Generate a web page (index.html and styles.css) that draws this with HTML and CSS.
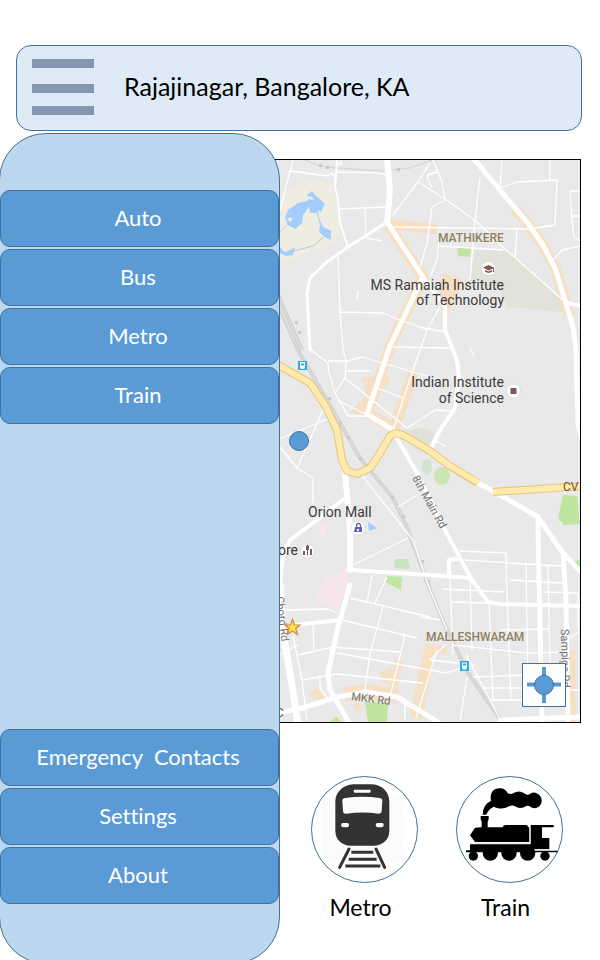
FILE: index.html
```html
<!DOCTYPE html>
<html lang="en">
<head>
<meta charset="utf-8">
<meta name="viewport" content="width=device-width, initial-scale=1">
<title>Transit finder</title>
<link rel="stylesheet" href="styles.css">
</head>
<body>
<div class="page">
  <header class="topbar">
    <button class="menu-button" type="button" aria-label="Menu">
      <svg viewBox="0 0 62 56" width="62" height="56" fill="#8497b0"><path d="M0 0h62v9H0zM0 25h62v9H0zM0 47h62v9H0z"/></svg>
    </button>
    <h1 class="place">Rajajinagar, Bangalore, KA</h1>
  </header>

  <div class="body">
    <nav class="sidebar">
      <div class="group">
        <button class="item" type="button">Auto</button>
        <button class="item" type="button">Bus</button>
        <button class="item" type="button">Metro</button>
        <button class="item" type="button">Train</button>
      </div>
      <div class="group">
        <button class="item" type="button">Emergency&nbsp; Contacts</button>
        <button class="item" type="button">Settings</button>
        <button class="item" type="button">About</button>
      </div>
    </nav>

    <main class="content">
      <section class="map">
        <svg class="map-art" viewBox="272 160 308 562" preserveAspectRatio="xMidYMid slice">
          <rect x="0" y="0" width="900" height="900" fill="#e9e9e9"/>
          <!-- parks, campus and water -->
          <path fill="#efece1" d="M272 200 290 188 307 180 331 183 335 197 338 213 340 232 333 245 313 250 283 263 272 265z"/>
          <path fill="#e1e2da" d="M475 250 503 250 523 263 547 287 565 303 563 312 507 307 500 290 470 283z"/>
          <path fill="#e0e1d9" d="M407 431 420 428 435 432 430 445 425 446z"/>
          <path fill="#a3ccff" d="M285 218 288 210 298 203 307 201 310 198 307 195 312 191 315 195 325 204 321 212 318 210 319 218 323 227 331 231 331 240 325 237 319 232 320 225 317 213 310 213 309 207 303 215 302 223 295 229 288 225zM272 243 280 247 285 252 288 251 295 247 293 255 287 256 280 253zM368 522 377 528 369 531z"/>
          <path fill="#efece1" d="M287 219 290 217 293 219 290 222zM308 198 311 196 314 199 311 200z"/>
          <path fill="none" stroke="#b5cce4" d="M294 251 313 246 325 236M276 236 287 225"/>
          <path fill="#bfe5a0" d="M457 247 471 247 470 257 458 256zM563 495 577 496 580 524 564 525 558 518zM387 576 402 577 401 590 385 582zM365 702 388 703 387 722 368 722zM330 722 336 716 341 722zM573 562 580 559 580 571z"/>
          <path fill="#c8e3bd" d="M395 559 408 559 410 569 394 568z"/>
          <ellipse cx="427" cy="467" rx="5" ry="8" fill="#d3e4cd"/>
          <ellipse cx="442" cy="476" rx="8" ry="9" fill="#c9e6b3"/>
          <path fill="#f7e6ec" d="M348 569 323 578 315 598 338 612 348 583zM318 526 325 523 327 535 320 538z"/>
          <!-- commercial strips -->
          <g fill="none" stroke="#f6dfc2">
            <path stroke-width="10" d="M390 224 436 229"/>
            <path stroke-width="11" d="M388 225 423 277 388 350"/>
            <path stroke-width="11" d="M393 340 367 412 394 429 414 371"/>
            <path stroke-width="11" d="M514 209 527 222 543 245 555 268 565 300 570 316"/>
            <path stroke-width="9" d="M400 661 390 697M313 690 322 700M360 705 355 709M558 700 570 700M571 650 571 722"/>
            <path stroke-width="12" d="M431 645 416 718"/>
            <path stroke-width="14" d="M345 694 367 691 397 696"/>
          </g>
          <path fill="#f6dfc2" d="M362 378 387 375 390 383 380 390 377 403 367 415 350 413 358 403 368 395zM443 273 463 280 455 300 448 313 441 310 440 290zM380 672 392 667 392 684 382 682zM432 644 447 648 447 654 432 653z"/>
          <!-- railways -->
          <g fill="none" stroke="#d3d3d3">
            <path stroke-width="1" d="M305 160 320 166 337 168 383 171 410 168 432 160"/>
            <path stroke-width="2" d="M274 287 280 297 303 350M280 303 300 350M276 302 297 350"/>
            <path stroke-width="4" d="M294 340 299 352 327 400 360 458 393 498 406 525 419 560 430 590 447 630 468 673 500 719"/>
            <path stroke-width="1" stroke="#dedede" d="M294 340 299 352 327 400 360 458 393 498 406 525 419 560 430 590 447 630 468 673 500 719"/>
          </g>
          <path fill="#c9c9c9" d="M319 164h3v3h-3zM326 166h3v3h-3zM397 168h3v3h-3zM298 331h3v3h-3zM295 321h3v3h-3zM328 397h3v3h-3zM339 422h3v3h-3zM347 436h3v3h-3zM359 457h3v3h-3zM391 496h3v3h-3zM402 515h3v3h-3zM421 560h3v3h-3zM427 580h3v3h-3z"/>
          <!-- minor streets -->
          <g fill="none" stroke="#fff" stroke-width="1.3" stroke-linejoin="round">
            <path d="M293 160 280 210M291 171 327 176 332 173 335 177M337 172 377 173 387 175M339 209 387 207M365 208 366 238 382 241M338 255 340 312 343 350 346 360 345 378 335 393M340 312 383 313 400 320 428 330M358 290 357 301M341 160v4h-3"/>
            <path d="M310 340 311 350 328 363 329 373 335 393 348 416 367 416M328 361 347 361 362 357 430 377M346 371 370 371M345 378 407 428M337 400 367 415M377 388 403 398M393 430 413 370 427 330 440 307M393 347 450 348M407 428 435 410 453 411M398 507 417 495M360 473 413 540 430 590 447 630"/>
            <path d="M430 163 417 183 393 215M418 182 445 199 477 222 503 247 563 300M445 200 442 182 433 160M430 173 427 177 432 188M427 175 438 172M445 200 432 207 427 243 420 267M440 230 437 260 430 277M393 227 530 229 555 225 557 180M502 160 500 188 517 182 557 180M550 160V180M480 177 475 220 470 280M440 246 503 250M517 230 515 257M580 191H570L572 220 574 237 580 241M572 216h8M553 260 562 250 580 246M420 327 445 332M470 348l4 8"/>
            <path d="M272 442 332 417M323 410 297 468M280 447 297 468 313 478 313 503M435 440 446 447"/>
            <path d="M350 598 430 617M342 620 417 638M285 610 328 609 338 613M293 636 302 680 307 721M298 655 333 647 400 652M313 625 314 650M302 680 337 674 423 683M337 653 430 670 445 673 468 667M383 607 370 653 365 690M405 635 390 697M372 575 367 602M387 577 375 603M353 565 408 538M320 675 320 688 330 702M280 655 298 645M405 700v20M420 617 440 620M437 650 416 718M445 645 430 660 475 665"/>
            <path d="M449 559 543 565 562 566M460 551 506 553 507 592 511 700M450 577 453 655M470 578 472 650M489 603 493 700M526 563 528 693M548 565 550 663M443 589 505 592M452 602 488 603M510 580 562 583M543 592 578 593 578 630M500 630 550 629M453 645 527 653 565 652M473 677 528 675M484 688h44M492 700h38M467 677 460 721M568 640 578 632M466 655 500 719M568 690h12"/>
          </g>
          <!-- main streets -->
          <g fill="none" stroke="#fff" stroke-linejoin="round" stroke-linecap="round">
            <path stroke-width="3" d="M387 222 348 247 327 262 310 278 307 293 310 350"/>
            <path stroke-width="2" d="M337 160 336 175 335 187 338 200 340 223 348 247"/>
            <path stroke-width="6" d="M387 158 390 190 387 222"/>
            <path stroke-width="5" d="M387 222 423 277 390 346 367 414 393 430"/>
            <path stroke-width="4" d="M423 277 445 307 445 330 457 360 459 377 455 408 440 430 430 450M567 303 582 306M295 625 340 620M449 575 449 560 458 559"/>
            <path stroke-width="5" d="M473 158 500 190 527 222 543 245 555 268 565 300 573 327 576 350 578 423 582 440"/>
            <path stroke-width="6" d="M337 430 345 472 350 530 350 570"/>
            <path stroke-width="4" d="M350 570 430 575 470 578M488 602 500 604 582 606M345 498 317 520 290 540 283 555 280 585M395 435 417 473 445 530 470 577 488 602"/>
            <path stroke-width="5" d="M478 483 495 492 538 517 538 530 542 721M538 517 547 530 563 553 582 573M563 553 566 600 568 721M350 585 338 627 328 673 330 690 350 724M272 714 303 708 337 697 367 692 397 697 430 717 440 724M500 720 582 717"/>
            <path stroke-width="7" d="M280 585 282 627 290 673 298 724"/>
          </g>
          <!-- highway -->
          <g fill="none" stroke-linejoin="round">
            <path stroke="#e6c67c" stroke-width="8" d="M270 360 280 366 310 383 325 405 337 430 342 460 347 471 357 474 370 468 380 453 390 436 395 433 403 435 430 451 450 466 478 483M493 492 582 486"/>
            <path stroke="#ffebae" stroke-width="6" d="M270 360 280 366 310 383 325 405 337 430 342 460 347 471 357 474 370 468 380 453 390 436 395 433 403 435 430 451 450 466 479 483M493 492 582 486"/>
          </g>
          <!-- pins -->
          <g fill="#fff" stroke="#d0d0d0" stroke-width=".6">
            <circle cx="488.500" cy="268.500" r="7"/><circle cx="513.500" cy="391" r="7"/><circle cx="358" cy="528" r="7"/><circle cx="307.500" cy="551" r="7"/>
          </g>
          <path fill="#7c5b53" d="M483 267.500 488.500 265 494 267.500V272H493V268.500L488.500 270.500zM485 270 488.500 271.500 492 270V272L488.500 273 485 272zM510.500 388h6v6h-6zM303 551h2v4h-2zM306 546l1.500-1.500L309 546v4h-1v5h-1v-5h-1zM310 549h2v6h-2z"/>
          <path fill="none" stroke="#5c63b5" stroke-width="1.300" d="M356.500 527v-1.500a2 2 0 0 1 4 0V527"/>
          <path fill="#5c63b5" d="M355 527h7v5h-8z"/><path fill="#fff" d="M357 529h2v2h-2z"/>
          <g transform="translate(298 361)"><rect width="9" height="9" fill="#22aee8"/><path fill="#fff" d="M2 1h5v6H6L7 8H2L3 7H2z"/><path fill="#22aee8" d="M3 2.500h3v2H3z"/></g>
          <g transform="translate(460 661)"><rect width="9" height="10" fill="#22aee8"/><path fill="#fff" d="M2 1.500h5v5.500H6L7 8.500H2L3 7H2z"/><path fill="#22aee8" d="M3 2.500h3v2H3z"/></g>
          <!-- labels -->
          <g class="poi" text-anchor="end">
            <text x="504" y="290">MS Ramaiah Institute</text>
            <text x="504" y="305">of Technology</text>
            <text x="504" y="387">Indian Institute</text>
            <text x="504" y="403">of Science</text>
            <text x="298" y="555">ore</text>
          </g>
          <text class="poi" x="308" y="517">Orion Mall</text>
          <g class="area"><text x="438" y="242">MATHIKERE</text><text x="426" y="641">MALLESHWARAM</text></g>
          <g class="street">
            <text transform="translate(412 478) rotate(61)">8th Main Rd</text>
            <text transform="translate(351 700) rotate(7)">MKK Rd</text>
            <text transform="translate(561 629) rotate(89)">Sampige Rd</text>
            <text transform="translate(276 597) rotate(83)">Chord Rd</text>
          </g>
          <text class="route" x="563" y="491">CV</text>
          <text class="route" x="276" y="717">C</text>
          <path fill="#ffe14d" stroke="#d18a45" stroke-width="1.200" d="M292.500 619.500 294.500 625H300L295.700 628.500 297.500 634.500 292.500 631 287.500 634.500 289.300 628.500 285 625H290.500z"/>
          <circle cx="299" cy="441" r="9.500" fill="#5b9bd5" stroke="#41719c"/>
        </svg>
        <button class="locate" type="button" aria-label="Center on my location">
          <svg viewBox="0 0 34 36" width="34" height="36"><path d="M17 0v36M0 17.500h34" stroke="#5b9bd5" stroke-width="4"/><circle cx="17" cy="18" r="9.500" fill="#5b9bd5" stroke="#41719c"/></svg>
        </button>
      </section>

      <section class="modes">
        <a class="mode" href="#metro">
          <svg class="mode-icon" viewBox="33 17 321 321">
            <circle cx="193.500" cy="177.500" r="159" fill="#fff" stroke="#41719c" stroke-width="3"/>
            <path fill="#fbfbfb" d="M68 80h244v190H68z"/>
            <path fill="#333" fill-rule="evenodd" d="M160 42H216C248 44 268 66 268 94V182C268 208 247 226 222 226H152C126 226 106 208 106 182V94C106 66 128 44 160 42zM164 58Q161 58 161 62T164 67H209Q212 67 212 62T209 58zM136 83Q127 83 127 91L129 122Q130 131 139 130Q187 123 236 130Q244 130 245 122L247 91Q247 83 238 83Q187 76 136 83zM129 158Q123 158 123 164T129 171H141Q147 171 147 164T141 158zM233 158Q227 158 227 164T233 171H245Q251 171 251 164T245 158z"/>
            <g fill="none" stroke="#333" stroke-linecap="round"><path stroke-width="9" d="M147 236 119 291M228 236 254 291"/><path stroke-width="9" stroke-linecap="butt" d="M154 246H220M146 267H230M136 287H241"/></g>
          </svg>
          <span class="mode-name">Metro</span>
        </a>
        <a class="mode" href="#train">
          <svg class="mode-icon" viewBox="33 17 321 321">
            <circle cx="193.500" cy="177.500" r="159" fill="#fff" stroke="#41719c" stroke-width="3"/>
            <path d="M113 133Q113 103 138 91C132 65 150 52 166 54Q180 54 188 68Q196 74 206 68Q222 58 240 70Q248 76 256 70C270 60 290 74 290 90C290 112 268 120 254 108Q246 104 240 109Q224 118 210 108Q202 103 192 108C174 119 156 114 147 109Q132 114 124 133z"/>
            <path d="M107 137H131V147L128 154V171H173Q175 164 182 164H242Q249 164 250 171H253V215H90L75 195 90 172 110 171V154L107 147z"/>
            <path d="M257 164H326V171H291V203H313V236H268V241H337V246H63V240H75V222H257z"/>
            <circle cx="85" cy="257" r="14"/><circle cx="136" cy="248" r="23"/><circle cx="192" cy="248" r="23"/><circle cx="248" cy="248" r="23"/><circle cx="300" cy="257" r="14"/>
            <path fill="none" stroke="#ddd" stroke-width="3" d="M94 219H255V166M268 238H313"/>
          </svg>
          <span class="mode-name">Train</span>
        </a>
      </section>
    </main>
  </div>
</div>
</body>
</html>
```
FILE: styles.css
```css
* { box-sizing: border-box; }

body {
  margin: 0;
  background: #fff;
  color: #000;
  font-family: Lato, "Liberation Sans", sans-serif;
  font-variant-ligatures: none;
}

button {
  font: inherit;
  font-variant-ligatures: none;
  cursor: pointer;
}

svg { display: block; }

.page {
  display: flex;
  flex-direction: column;
  min-height: 100vh;
  padding-top: 45px;
  overflow: hidden;
}

.topbar {
  display: flex;
  align-items: center;
  gap: 30px;
  margin: 0 18px 0 16px;
  padding: 13px 15px 15px;
  border: 1px solid #41719c;
  border-radius: 15px;
  background: #deeaf6;
}

.menu-button {
  padding: 0;
  border: 0;
  background: none;
}

.place {
  margin: 0;
  padding-bottom: 2px;
  font-size: 25px;
  line-height: 32px;
  font-weight: 400;
}

.body {
  display: flex;
  flex: 1;
  margin-top: 2px;
}

.sidebar {
  position: relative;
  z-index: 1;
  display: flex;
  flex: 0 0 281px;
  flex-direction: column;
  justify-content: space-between;
  margin: 0 0 -4px -1px;
  padding: 56px 0 59px;
  border: 1px solid #41719c;
  border-radius: 47px;
  background: #bdd7ee;
}

.group {
  display: flex;
  flex-direction: column;
  gap: 2px;
}

.item {
  height: 57px;
  padding: 0 3px 2px 0;
  border: 1px solid #41719c;
  border-radius: 10px;
  background: #5b9bd5;
  color: #fff;
  font-size: 22px;
  line-height: 28px;
}

.content {
  flex: 1;
  min-width: 0;
}

.map {
  position: relative;
  margin: 26px 19px 0 -9px;
  border: 1px solid #000;
}

.map-art {
  width: 100%;
  height: auto;
}

.poi {
  fill: #3c3c3c;
  font: 14px Roboto, sans-serif;
}

.area {
  fill: #8f8160;
  font: 500 12px Roboto, sans-serif;
}

.street {
  fill: #707070;
  font: 11px Roboto, sans-serif;
}

.route {
  fill: #7b4a2a;
  font: 12px Roboto, sans-serif;
}

.locate {
  position: absolute;
  right: 14px;
  bottom: 15px;
  display: grid;
  place-items: center;
  width: 44px;
  height: 44px;
  padding: 0;
  border: 1px solid #41719c;
  background: #fff;
}

.modes {
  display: flex;
  gap: 38px;
  padding: 53px 0 0 31px;
}

.mode {
  display: flex;
  flex-direction: column;
  align-items: center;
  gap: 10px;
  color: #000;
  font-size: 23px;
  line-height: 28px;
  text-decoration: none;
}

.mode-name { padding-right: 8px; }

.mode-icon {
  width: 107px;
  height: 107px;
}
```
